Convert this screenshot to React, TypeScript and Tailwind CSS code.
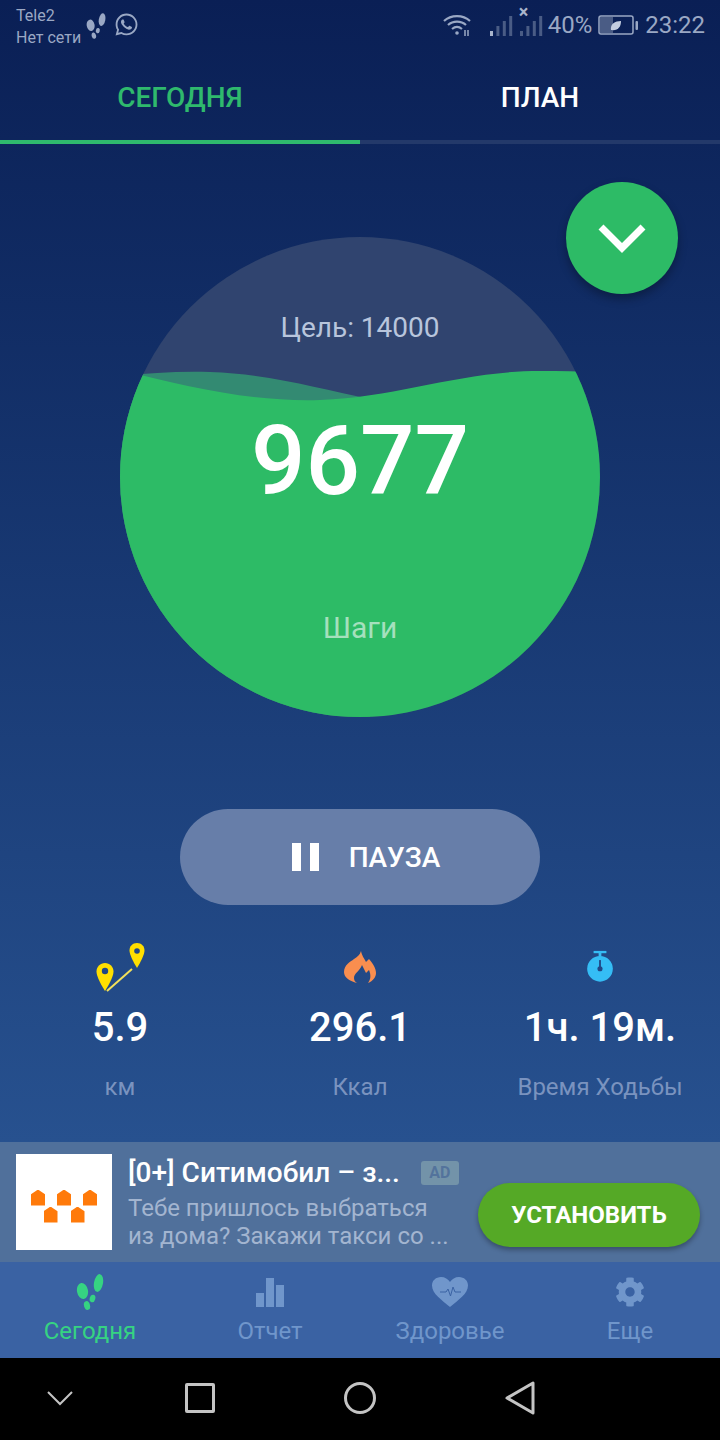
import { FaCog, FaWhatsapp } from "react-icons/fa";

function Footprints({ className }: { className: string }) {
  return (
    <svg viewBox="0 0 28 36" className={className} fill="currentColor">
      <ellipse cx="22.500" cy="9" rx="4.500" ry="9" transform="rotate(10 22.500 9)" />
      <ellipse cx="16.500" cy="24.500" rx="2.800" ry="3.800" transform="rotate(15 16.500 24.500)" />
      <ellipse cx="6.500" cy="17" rx="5.500" ry="8" transform="rotate(-10 6.500 17)" />
      <ellipse cx="11" cy="31.500" rx="3" ry="4.500" transform="rotate(-15 11 31.500)" />
    </svg>
  );
}

function Signal({ dim }: { dim?: boolean }) {
  const bars = [5, 10, 15, 20];
  return (
    <svg viewBox="0 0 24 22" className="h-[22px] w-6">
      {bars.map((h, i) => (
        <rect
          key={h}
          x={i * 6.4 + 1}
          y={22 - h}
          width="3"
          height={h}
          fill={!dim && i === 0 ? "#a9b5cc" : "#4a5c85"}
        />
      ))}
    </svg>
  );
}

function StatusBar() {
  return (
    <div className="flex h-[50px] items-start justify-between pl-4 pr-[15px] text-[#9aa8c4]">
      <div className="flex items-start">
        <div className="pt-[5px] text-base leading-[22px]">
          <div>Tele2</div>
          <div>Нет сети</div>
        </div>
        <Footprints className="ml-[5px] mt-[13px] h-[26px] w-5" />
        <FaWhatsapp className="ml-[8px] mt-[12px] text-[25px]" />
      </div>
      <div className="flex items-center pt-[13px]">
        <svg viewBox="0 0 28 24" className="h-6 w-7" fill="none" stroke="currentColor" strokeWidth="2.2">
          <path d="M1 8c7-6.500 19-6.500 26 0M5 12c5-4.500 13-4.500 18 0M9 16c3-2.500 7-2.500 10 0" />
          <circle cx="14" cy="20" r="1.800" fill="currentColor" stroke="none" />
          <path d="M22 17v6M25 17v6" strokeWidth="1.500" />
        </svg>
        <div className="ml-[18px]">
          <Signal />
        </div>
        <div className="relative ml-[6px]">
          <Signal dim />
          <span className="absolute -top-[11px] left-0 text-lg font-bold leading-none text-[#a9b5cc]">×</span>
        </div>
        <span className="ml-[5px] text-2xl leading-6">40%</span>
        <svg viewBox="0 0 40 20" className="ml-[6px] h-5 w-10" fill="none">
          <rect x="1" y="1" width="34" height="18" rx="2" stroke="currentColor" strokeWidth="1.500" />
          <rect x="2" y="2" width="13" height="16" fill="#4a5c85" />
          <path d="M13 15c-1-6 4-9 10-9 0 6-3 10-10 9z" fill="#c3cde0" />
          <rect x="37.500" y="6" width="2.500" height="9" rx="1" fill="currentColor" />
        </svg>
        <span className="ml-[7px] text-2xl leading-6">23:22</span>
      </div>
    </div>
  );
}

function TopTabs() {
  return (
    <div className="grid grid-cols-2 text-[28px] font-medium leading-none">
      <div className="flex h-[94px] items-center justify-center border-b-4 border-[#2fb96d] pt-[5px] text-[#2fb96d]">СЕГОДНЯ</div>
      <div className="flex h-[94px] items-center justify-center border-b-4 border-[#23396a] pt-[5px] text-white">ПЛАН</div>
    </div>
  );
}

function StepsCircle() {
  return (
    <div className="relative mx-auto mt-[93px] h-[480px] w-[480px] overflow-hidden rounded-full bg-[#30446f]">
      <svg viewBox="0 0 480 480" className="absolute inset-0 h-full w-full">
        <path d="M0 139C30 136 60 134 90 135C150 137 200 152 250 162V480H0Z" fill="#338a72" />
        <path d="M0 133C70 150 130 165 200 163C280 160 340 134 420 134C440 134 460 134 480 136V480H0Z" fill="#2dbb66" />
      </svg>
      <div className="relative flex h-full flex-col items-center">
        <div className="mt-[73px] text-[28px] leading-9 text-[#b8c5dc]">Цель: 14000</div>
        <div className="mt-[55px] text-[96px] font-medium leading-[120px] text-white">9677</div>
        <div className="mt-[89px] text-[30px] leading-9 text-[#a5e0bd]">Шаги</div>
      </div>
    </div>
  );
}

function PauseButton() {
  return (
    <div className="mx-auto mt-[92px] flex h-24 w-[360px] items-center justify-center rounded-full bg-[#677ea9] pl-2">
      <div className="flex gap-[9px] pl-1">
        <div className="h-7 w-[9px] bg-white" />
        <div className="h-7 w-[9px] bg-white" />
      </div>
      <span className="ml-[30px] pt-[2px] text-[28px] font-medium leading-none text-white">ПАУЗА</span>
    </div>
  );
}

function RouteIcon() {
  return (
    <svg viewBox="0 0 56 52" className="-ml-1 h-[52px] w-14">
      <path d="M47 2c-4.500 0-7.500 3.300-7.500 7.500C39.500 15 47 27 47 27s7.500-12 7.500-17.500C54.500 5.300 51.500 2 47 2z" fill="#ffdf00" />
      <circle cx="47" cy="10" r="2.800" fill="#214785" />
      <path d="M15 22c-4.800 0-8.500 3.700-8.500 8.500C6.500 37 15 50 15 50s8.500-13 8.500-19.500C23.500 25.700 19.800 22 15 22z" fill="#ffdf00" />
      <circle cx="15" cy="30" r="3.200" fill="#214785" />
      <path d="M17 50L42 28" stroke="#f3e05a" strokeWidth="2" />
    </svg>
  );
}

function FlameIcon() {
  return (
    <svg viewBox="0 0 32 32" className="mb-[10px] h-8 w-8">
      <path
        d="M17 0C18 5 20 7 22 11L25 8C29 13 32 17 32 22C32 26 29 30 24 32C27 28 27 24 25 19L22 22L18 14C16 20 10 22 10 27C10 29 11 31 13 32C6 30 0 27 0 21C0 14 6 11 10 8C13 6 16 4 17 0Z"
        fill="#f98e4f"
      />
    </svg>
  );
}

function StopwatchIcon() {
  return (
    <svg viewBox="0 0 30 36" className="mb-[10px] h-[33px] w-[30px]">
      <rect x="8" y="1" width="14" height="2.500" fill="#35bdf5" />
      <rect x="13.500" y="3" width="3" height="4" fill="#35bdf5" />
      <circle cx="15" cy="20.500" r="14" fill="#35bdf5" />
      <rect x="14" y="11" width="2" height="8" fill="#214785" />
      <circle cx="15" cy="20.500" r="2.800" fill="#214785" />
    </svg>
  );
}

function Stat({ icon, value, label }: { icon: React.ReactNode; value: string; label: string }) {
  return (
    <div className="flex flex-col items-center">
      <div className="flex h-[58px] items-end justify-center">{icon}</div>
      <div className="mt-[12px] text-[40px] font-medium leading-[46px] text-white">{value}</div>
      <div className="mt-[20px] text-2xl leading-8 text-[#7a93bf]">{label}</div>
    </div>
  );
}

function TaxiLogo() {
  const top = [0, 1, 2];
  const bottom = [0, 1];
  const house = "h-4 w-[14px] bg-[#ff7a0a] [clip-path:polygon(50%_0,100%_30%,100%_100%,0_100%,0_30%)]";
  return (
    <div className="flex h-24 w-24 shrink-0 flex-col items-center justify-center bg-white pt-[8px]">
      <div className="flex gap-3">
        {top.map((i) => (
          <div key={i} className={house} />
        ))}
      </div>
      <div className="mt-[1px] flex gap-[13px]">
        {bottom.map((i) => (
          <div key={i} className={house} />
        ))}
      </div>
    </div>
  );
}

function AdBanner() {
  return (
    <div className="flex h-[120px] items-center bg-[#50709b] pl-4 pr-5">
      <TaxiLogo />
      <div className="ml-4 w-[330px]">
        <div className="flex h-[36px] items-center">
          <span className="whitespace-nowrap text-[28px] font-medium leading-none text-white">[0+] Ситимобил – з...</span>
          <span className="ml-[21px] flex h-6 w-[38px] shrink-0 items-center justify-center rounded-[3px] bg-[#7393a9] text-base font-bold leading-none text-[#53739c]">AD</span>
        </div>
        <div className="mt-[3px] text-2xl leading-[28px] text-[#a3b5d0]">
          <div>Тебе пришлось выбраться</div>
          <div>из дома? Закажи такси со ...</div>
        </div>
      </div>
      <div className="ml-auto mt-[26px] flex h-16 w-[222px] items-center justify-center rounded-full bg-[#55a926] text-2xl font-bold leading-none text-white shadow-[0_3px_5px_rgba(0,0,0,0.3)]">
        УСТАНОВИТЬ
      </div>
    </div>
  );
}

function BottomTab({ icon, label, active }: { icon: React.ReactNode; label: string; active?: boolean }) {
  return (
    <div className={active ? "flex flex-col items-center text-[#36d382]" : "flex flex-col items-center text-[#7096cb]"}>
      <div className="flex h-[38px] items-center justify-center">{icon}</div>
      <div className="mt-[4px] text-2xl leading-8">{label}</div>
    </div>
  );
}

function BottomTabs() {
  return (
    <div className="grid h-24 grid-cols-4 bg-[#3a62a3] pt-[11px]">
      <BottomTab active label="Сегодня" icon={<Footprints className="h-[36px] w-[28px]" />} />
      <BottomTab
        label="Отчет"
        icon={
          <div className="flex items-end gap-[2px]">
            <div className="h-[14px] w-2 bg-current" />
            <div className="h-[29px] w-2 bg-current" />
            <div className="h-[22px] w-2 bg-current" />
          </div>
        }
      />
      <BottomTab
        label="Здоровье"
        icon={
          <svg viewBox="0 0 36 30" className="h-[30px] w-9">
            <path d="M18 30C10 23 0 17 0 8.500 0 3.500 4 0 9 0c4 0 7 2 9 5 2-3 5-5 9-5 5 0 9 3.500 9 8.500C36 17 26 23 18 30z" fill="currentColor" />
            <path d="M8 15h6l2-3 2.500 7 2.500-9 2 5h6" stroke="#3a62a3" strokeWidth="1" fill="none" />
          </svg>
        }
      />
      <BottomTab label="Еще" icon={<FaCog className="text-[30px]" />} />
    </div>
  );
}

function NavBar() {
  return (
    <div className="grid h-[82px] grid-cols-[120px_160px_160px_160px] items-center bg-black pb-[3px] text-[#c4c4c4]">
      <div className="flex justify-center">
        <svg viewBox="0 0 26 16" className="h-4 w-[26px]" fill="none" stroke="currentColor" strokeWidth="2">
          <path d="M1 2l12 12L25 2" />
        </svg>
      </div>
      <div className="flex justify-center">
        <div className="h-[30px] w-[30px] rounded-[2px] border-[3px] border-current" />
      </div>
      <div className="flex justify-center">
        <div className="h-8 w-8 rounded-full border-[3px] border-current" />
      </div>
      <div className="flex justify-center">
        <svg viewBox="0 0 30 34" className="h-[34px] w-[30px]" fill="none" stroke="currentColor" strokeWidth="3" strokeLinejoin="round">
          <path d="M28 2v30L2 17z" />
        </svg>
      </div>
    </div>
  );
}

export default function App() {
  return (
    <div className="flex h-[1440px] w-[720px] flex-col overflow-hidden font-['Roboto',sans-serif]">
      <div className="relative flex h-[1142px] flex-col bg-gradient-to-b from-[#0a1f55] to-[#27518f]">
        <StatusBar />
        <TopTabs />
        <StepsCircle />
        <div className="absolute left-[566px] top-[182px] flex h-28 w-28 items-center justify-center rounded-full bg-[#2dbb66] shadow-[0_5px_10px_rgba(0,0,0,0.3)]">
          <svg viewBox="0 0 48 32" className="h-8 w-12" fill="none" stroke="white" strokeWidth="7">
            <path d="M3 5l21 21L45 5" />
          </svg>
        </div>
        <PauseButton />
        <div className="mt-[30px] grid grid-cols-3">
          <Stat icon={<RouteIcon />} value="5.9" label="км" />
          <Stat icon={<FlameIcon />} value="296.1" label="Ккал" />
          <Stat icon={<StopwatchIcon />} value="1ч. 19м." label="Время Ходьбы" />
        </div>
      </div>
      <AdBanner />
      <BottomTabs />
      <NavBar />
    </div>
  );
}
